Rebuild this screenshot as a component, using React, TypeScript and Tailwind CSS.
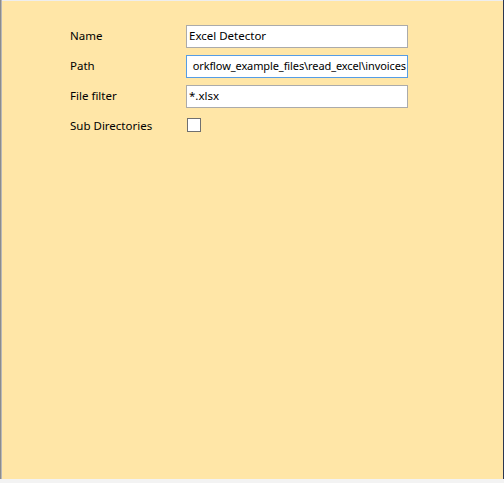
import React from 'react';

const FONT = { fontFamily: '"Noto Sans", "Open Sans", sans-serif' };

function Field({ label, children }: { label: string; children: React.ReactNode }) {
  return (
    <div className="flex items-center h-[30px]">
      <span className="w-[116px] text-[11.5px] text-black leading-none">{label}</span>
      {children}
    </div>
  );
}

function TextBox({ value, focused, alignEnd }: { value: string; focused?: boolean; alignEnd?: boolean }) {
  return (
    <div
      className={`w-[222px] h-[23px] bg-white border flex items-center overflow-hidden whitespace-nowrap text-black ${
        focused ? 'border-[#569de5] px-[1px] text-[11px] tracking-[-0.1px]' : 'border-[#ababab] px-[2px] text-[11.5px]'
      } ${alignEnd ? 'justify-end' : 'justify-start'}`}
    >
      <span>{value}</span>
    </div>
  );
}

export default function App() {
  return (
    <div className="w-[504px] h-[483px] bg-[#f3f3f3] flex flex-col" style={FONT}>
      <div className="flex h-[479px]">
        <div className="w-[2px] bg-[#8c8c8c] border-r border-[#b8b8b8]" />
        <div className="flex-1 flex flex-col">
          <div className="h-px bg-[#eeeeee]" />
          <div className="flex-1 bg-[#ffe6a7] pl-[68px] pt-[20px]">
            <Field label="Name">
              <TextBox value="Excel Detector" />
            </Field>
            <Field label="Path">
              <TextBox value="orkflow_example_files\read_excel\invoices" focused alignEnd />
            </Field>
            <Field label="File filter">
              <TextBox value="*.xlsx" />
            </Field>
            <Field label="Sub Directories">
              <div className="w-[14px] h-[14px] bg-white border border-[#707070] ml-[1px] -mt-[2px]" />
            </Field>
          </div>
        </div>
        <div className="w-px bg-[#2b3650]" />
      </div>
    </div>
  );
}
